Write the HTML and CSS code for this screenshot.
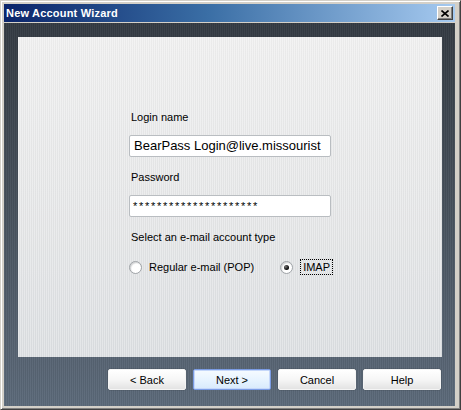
FILE: index.html
```html
<!DOCTYPE html>
<html>
<head>
<meta charset="utf-8">
<link rel="stylesheet" href="styles.css">
</head>
<body>
<div class="window">
  <div class="titlebar">
    <span class="title">New Account Wizard</span>
    <span class="close"><svg width="8" height="7" viewBox="0 0 8 7"><path d="M0.5 0.5 L7.5 6.5 M7.5 0.5 L0.5 6.5" stroke="#000" stroke-width="1.6" fill="none"/></svg></span>
  </div>
  <div class="body">
    <div class="panel">
      <div class="form">
        <div class="label">Login name</div>
        <div class="field">BearPass Login@live.missourist</div>
        <div class="label">Password</div>
        <div class="field pw">*********************</div>
        <div class="label">Select an e-mail account type</div>
        <div class="radios">
          <div class="opt"><span class="radio"></span><span class="rlabel">Regular e-mail (POP)</span></div>
          <div class="opt opt2"><span class="radio on"><span class="dot"></span></span><span class="rlabel focus">IMAP</span></div>
        </div>
      </div>
    </div>
    <div class="buttons">
      <div class="btn">&lt; Back</div>
      <div class="btn default">Next &gt;</div>
      <div class="btn">Cancel</div>
      <div class="btn">Help</div>
    </div>
  </div>
</div>
</body>
</html>
```
FILE: styles.css
```css
html, body { margin: 0; padding: 0; }
body { width: 461px; height: 410px; overflow: hidden; font-family: "Liberation Sans", Arial, sans-serif; font-size: 11px; color: #000; }
.window {
  width: 461px; height: 410px; box-sizing: border-box;
  background: #d4d0c8;
  border-top: 1px solid #d4d0c8; border-left: 1px solid #d4d0c8;
  border-right: 1px solid #404040; border-bottom: 1px solid #404040;
  box-shadow: inset 1px 1px 0 #fff, inset -1px -1px 0 #808080;
  padding: 3px 5px 3px 3px;
  display: flex; flex-direction: column;
}
.titlebar {
  height: 18px; flex: none;
  background: linear-gradient(to right, #0a246a 0%, #3a6ea5 45%, #a6caf0 100%);
  display: flex; align-items: center; justify-content: space-between;
  padding: 0 2px 0 2px;
}
.title { color: #fff; font-weight: bold; font-size: 11px; letter-spacing: 0.2px; }
.close {
  width: 16px; height: 14px; box-sizing: border-box; background: #d4d0c8;
  border-top: 1px solid #fff; border-left: 1px solid #fff;
  border-right: 1px solid #404040; border-bottom: 1px solid #404040;
  box-shadow: inset -1px -1px 0 #808080;
  display: flex; align-items: center; justify-content: center;
}
.body {
  margin-top: 1px; flex: 1;
  background:
    repeating-linear-gradient(to right, rgba(255,255,255,0.035) 0 1px, rgba(0,0,0,0.05) 1px 2px),
    linear-gradient(to bottom, #343b43 0%, #46505b 45%, #5c6a7a 100%);
  padding: 14px 13px 0 14px;
  display: flex; flex-direction: column;
}
.panel {
  height: 320px; box-sizing: border-box;
  background:
    repeating-linear-gradient(to right, rgba(255,255,255,0.25) 0 1px, rgba(0,0,0,0.02) 1px 2px),
    linear-gradient(to bottom, #efefef 0%, #e6e7e8 50%, #dbdee1 100%);
  padding: 74px 0 0 111px;
}
.form { display: flex; flex-direction: column; align-items: flex-start; }
.label { line-height: 13px; height: 13px; margin-left: 2px; }
.field {
  width: 202px; height: 22px; box-sizing: border-box;
  background: #fff; border: 1px solid #b9bdc1; border-radius: 2px;
  margin-top: 11px; margin-bottom: 14px;
  font-size: 13px; line-height: 20px; padding-left: 4px; white-space: nowrap; overflow: hidden;
}
.field.pw { font-size: 11px; letter-spacing: 1.72px; padding-left: 3px; }
.radios { display: flex; margin-top: 15px; height: 16px; align-items: center; }
.opt { display: flex; align-items: center; }
.opt2 { margin-left: 26px; }
.radio {
  width: 13px; height: 13px; box-sizing: border-box; border-radius: 50%;
  border: 1px solid #a0a4a8;
  background: radial-gradient(circle at 60% 60%, #fff 0 45%, #e6e8ea 80%, #cfd3d6 100%);
  box-shadow: inset 1px 1px 1px rgba(0,0,0,0.12);
  display: flex; align-items: center; justify-content: center;
  margin-right: 7px;
}
.dot { width: 5px; height: 5px; border-radius: 50%; background: radial-gradient(circle at 35% 35%, #777 0, #000 70%); }
.rlabel { line-height: 14px; }
.rlabel.focus { border: 1px dotted #000; padding: 0 2px; height: 14px; }
.buttons { display: flex; justify-content: flex-end; gap: 7px; margin-top: 12px; padding-right: 1px; }
.btn {
  width: 78px; height: 21px; box-sizing: border-box;
  border: 1px solid #f4f4f4; border-radius: 2px;
  background: linear-gradient(to bottom, #ffffff 0%, #f6f6f6 50%, #e3e3e3 100%);
  box-shadow: 0 0 0 0.5px rgba(0,0,0,0.15);
  display: flex; align-items: center; justify-content: center;
  font-size: 11px;
}
.btn.default {
  border: 1px solid #7b9ce4;
  background: linear-gradient(to bottom, #f6fbff 0%, #e8f4ff 50%, #d8eafc 100%);
  box-shadow: inset 0 0 0 1px #c6d8fa;
}
```
